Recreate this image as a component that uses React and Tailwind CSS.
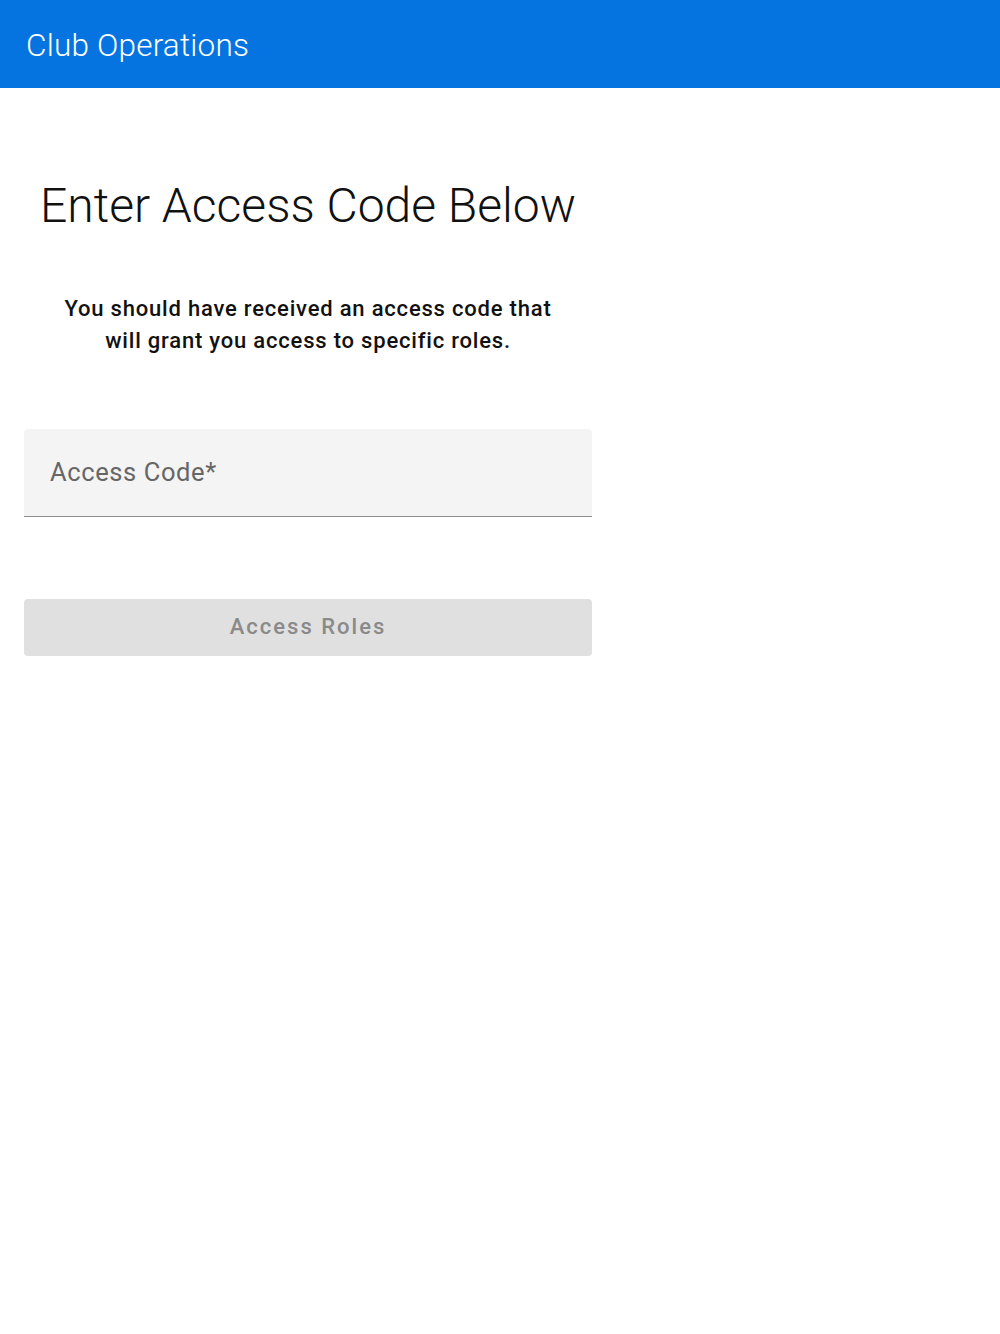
import React from 'react'

const App = () => {
  return (
    <div className="min-h-[1334px] bg-white" style={{ fontFamily: 'Roboto, "Liberation Sans", sans-serif' }}>
      <header className="h-[88px] bg-[#0574e0] flex items-center px-[26px]">
        <h1 className="text-white text-[31.5px] font-light tracking-[0.2px] pt-[3px]">Club Operations</h1>
      </header>

      <main className="w-[568px] ml-[24px] flex flex-col items-center">
        <h2 className="mt-[88px] text-[48px] font-light text-[#111] leading-[60px] text-center">
          Enter Access Code Below
        </h2>
        <p className="mt-[57px] text-[22px] font-medium text-[#111] leading-[32px] tracking-[0.8px] text-center">
          You should have received an access code that
          <br />
          will grant you access to specific roles.
        </p>

        <div className="mt-[72px] w-full h-[88px] bg-[#f4f4f4] rounded-t-[4px] border-b border-[#8c8c8c] flex items-center px-[26px]">
          <span className="text-[25.5px] text-[#666] tracking-[0.6px]">Access Code*</span>
        </div>

        <button
          disabled
          className="mt-[82px] w-full h-[57px] bg-[#e0e0e0] rounded-[4px] text-[22px] font-medium text-[#8a8a8a] tracking-[2px] pb-[3px]"
        >
          Access Roles
        </button>
      </main>
    </div>
  )
}

export default App
